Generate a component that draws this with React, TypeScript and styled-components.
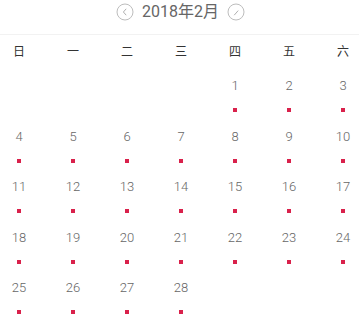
import React from "react";
import styled, { createGlobalStyle } from "styled-components";

const GlobalStyle = createGlobalStyle`
  body {
    margin: 0;
    background: #fff;
    font-family: Roboto, "Noto Sans CJK SC", sans-serif;
  }
`;

const weekDays = ["日", "一", "二", "三", "四", "五", "六"];

const buildDays = () => {
  const cells: Array<number | null> = [];
  const offset = 4; // 2018-02-01 is a Thursday
  for (let i = 0; i < offset; i++) cells.push(null);
  for (let d = 1; d <= 28; d++) cells.push(d);
  return cells;
};

const Arrow = ({ dir }: { dir: "left" | "right" }) => (
  <svg width="18" height="18" viewBox="0 0 18 18">
    <circle cx="9" cy="9" r="8" fill="none" stroke="#bdbdbd" strokeWidth="1" />
    {dir === "left" ? (
      <path d="M10.2 5.8 L7.4 9 L10.2 12.2" fill="none" stroke="#b0b0b0" strokeWidth="1" />
    ) : (
      <path d="M7.2 12.2 L11.2 7.6" fill="none" stroke="#b0b0b0" strokeWidth="1" />
    )}
  </svg>
);

const App: React.FC = () => {
  const days = buildDays();
  return (
    <Page>
      <GlobalStyle />
      <Header>
        <ArrowButton>
          <Arrow dir="left" />
        </ArrowButton>
        <Title>2018年2月</Title>
        <ArrowButton>
          <Arrow dir="right" />
        </ArrowButton>
      </Header>
      <Grid>
        {weekDays.map((w) => (
          <WeekDay key={w}>{w}</WeekDay>
        ))}
      </Grid>
      <Grid>
        {days.map((d, i) => (
          <DayCell key={i}>
            {d !== null && (
              <>
                <DayNumber>{d}</DayNumber>
                <Dot />
              </>
            )}
          </DayCell>
        ))}
      </Grid>
    </Page>
  );
};

const Page = styled.div`
  width: 359px;
  height: 320px;
  overflow: hidden;
`;

const Header = styled.div`
  height: 35px;
  display: flex;
  align-items: center;
  justify-content: center;
  gap: 8px;
  border-bottom: 1px solid #f2f2f2;
  box-sizing: border-box;
  padding-left: 2px;
`;

const ArrowButton = styled.div`
  display: flex;
  width: 18px;
  height: 18px;
  margin-top: -10px;
`;

const Title = styled.div`
  font-size: 16px;
  color: #666;
  line-height: 20px;
  margin-top: -10px;
`;

const Grid = styled.div`
  display: grid;
  grid-template-columns: repeat(7, 54px);
  margin-left: -8px;
`;

const WeekDay = styled.div`
  height: 30px;
  display: flex;
  align-items: center;
  justify-content: center;
  font-size: 12px;
  color: #333;
  font-family: "Noto Sans CJK SC", sans-serif;
`;

const DayCell = styled.div`
  height: 50.5px;
  display: flex;
  flex-direction: column;
  align-items: center;
`;

const DayNumber = styled.div`
  margin-top: 13px;
  height: 16px;
  line-height: 16px;
  font-size: 13px;
  font-weight: 300;
  color: #666;
`;

const Dot = styled.div`
  margin-top: 14px;
  width: 4px;
  height: 4px;
  background: #d9214b;
`;

export default App;
